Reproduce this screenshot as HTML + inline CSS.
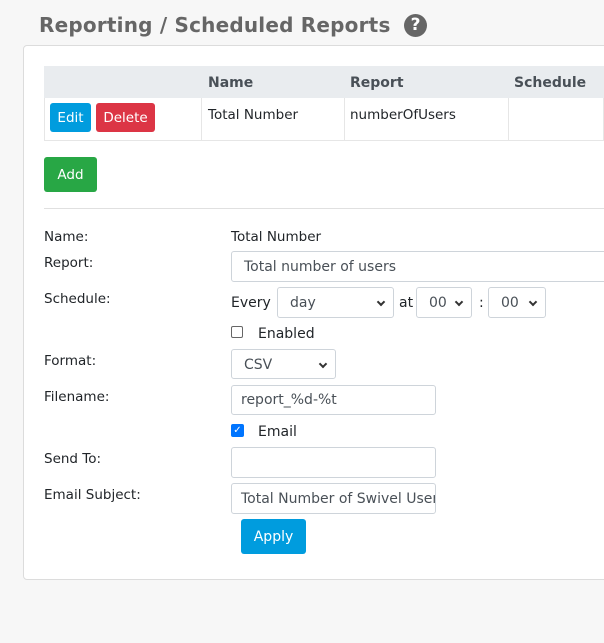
<!DOCTYPE html>
<html><head><style>
*{box-sizing:border-box;margin:0;padding:0}
body{width:604px;height:643px;background:#f7f7f7;font-family:"DejaVu Sans",sans-serif;font-size:13.5px;color:#212529;position:relative;overflow:hidden}
.a{position:absolute}
h1{position:absolute;left:39px;top:13px;font-family:"DejaVu Sans",sans-serif;font-size:20px;font-weight:bold;color:#666;letter-spacing:0.2px;white-space:nowrap}
.help{position:absolute;left:404px;top:14px;width:23px;height:23px;border-radius:50%;background:#666;color:#fff;font-weight:bold;font-size:17px;text-align:center;line-height:23px}
.panel{position:absolute;left:23px;top:45px;width:600px;height:535px;background:#fff;border:1px solid #dcdcdc;border-radius:4px}
.th{background:#e9ecef;font-weight:bold;color:#495057;font-size:14px}
.btn{position:absolute;color:#fff;border-radius:3px;text-align:center;font-size:13.5px}
.inp{position:absolute;border:1px solid #ced4da;border-radius:3px;background:#fff;color:#495057;font-size:14px;padding-left:9px;white-space:nowrap;overflow:hidden}
.sel{position:absolute;border:1px solid #ced4da;border-radius:3px;background:#fff;color:#495057;font-size:14px;padding-left:12px}
.sel:after{content:"";position:absolute;right:9px;top:11px;width:4px;height:4px;border-right:2px solid #333;border-bottom:2px solid #333;transform:rotate(45deg)}
.lbl{position:absolute;left:44px}
</style></head><body>
<h1>Reporting / Scheduled Reports</h1>
<div class="help">?</div>
<div class="panel"></div>
<div class="a th" style="left:44px;top:66px;width:560px;height:32px"></div>
<div class="a th" style="left:208px;top:75px">Name</div>
<div class="a th" style="left:350px;top:75px">Report</div>
<div class="a th" style="left:514px;top:75px">Schedule</div>
<div class="a" style="left:44px;top:98px;width:560px;height:43px;border:1px solid #e6e6e6;border-top:none"></div>
<div class="a" style="left:201px;top:98px;width:1px;height:42px;background:#e6e6e6"></div>
<div class="a" style="left:344px;top:98px;width:1px;height:42px;background:#e6e6e6"></div>
<div class="a" style="left:508px;top:98px;width:1px;height:42px;background:#e6e6e6"></div>
<div class="btn" style="left:50px;top:103px;width:41px;height:29px;line-height:30px;background:#009cde">Edit</div>
<div class="btn" style="left:96px;top:103px;width:59px;height:29px;line-height:30px;background:#dc3545">Delete</div>
<div class="a" style="left:208px;top:107px">Total Number</div>
<div class="a" style="left:350px;top:107px">numberOfUsers</div>
<div class="btn" style="left:44px;top:157px;width:53px;height:35px;line-height:36px;background:#28a745">Add</div>
<div class="a" style="left:44px;top:208px;width:560px;height:1px;background:#e0e0e0"></div>

<div class="lbl" style="top:229px">Name:</div>
<div class="a" style="left:231px;top:229px">Total Number</div>
<div class="lbl" style="top:255px">Report:</div>
<div class="inp" style="left:231px;top:251px;width:380px;height:31px;line-height:30px;padding-left:12px">Total number of users</div>
<div class="lbl" style="top:291px">Schedule:</div>
<div class="a" style="left:231px;top:295px;font-size:14px">Every</div>
<div class="sel" style="left:277px;top:287px;width:117px;height:31px;line-height:30px">day</div>
<div class="a" style="left:399px;top:295px;font-size:14px">at</div>
<div class="sel" style="left:416px;top:287px;width:56px;height:31px;line-height:30px">00</div>
<div class="a" style="left:479px;top:295px;font-size:14px">:</div>
<div class="sel" style="left:488px;top:287px;width:58px;height:31px;line-height:30px">00</div>
<div class="a" style="left:231px;top:326px;width:12px;height:12px;border:1px solid #666;border-radius:2px;background:#fff"></div>
<div class="a" style="left:258px;top:326px;font-size:14px">Enabled</div>
<div class="lbl" style="top:353px">Format:</div>
<div class="sel" style="left:231px;top:349px;width:105px;height:30px;line-height:30px">CSV</div>
<div class="lbl" style="top:389px">Filename:</div>
<div class="inp" style="left:231px;top:385px;width:205px;height:30px;line-height:29px">report_%d-%t</div>
<div class="a" style="left:231px;top:424px;width:13px;height:13px;border-radius:2px;background:#0075ff;color:#fff;font-size:10px;line-height:13px;text-align:center;font-weight:bold">✓</div>
<div class="a" style="left:258px;top:424px;font-size:14px">Email</div>
<div class="lbl" style="top:451px">Send To:</div>
<div class="inp" style="left:231px;top:447px;width:205px;height:31px"></div>
<div class="lbl" style="top:487px">Email Subject:</div>
<div class="inp" style="left:231px;top:483px;width:205px;height:31px;line-height:30px;padding-right:3px">Total Number of Swivel Users</div>
<div class="btn" style="left:241px;top:519px;width:65px;height:35px;line-height:36px;background:#009cde;font-size:14px">Apply</div>
</body></html>
